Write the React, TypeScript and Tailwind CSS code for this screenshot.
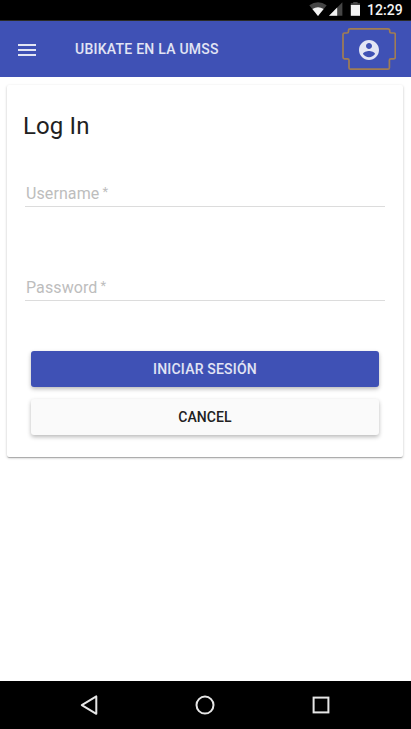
import React from "react";

function StatusBar() {
  return (
    <div className="flex h-[21px] items-start justify-end border-b border-[#2a2a26] bg-black pr-[8px]">
      <svg className="h-5 w-[52px]" viewBox="309 0 52 20">
        <path d="M309.3 5.3Q318 -.7 326.7 5.3L318 16Z" fill="#454545" />
        <path d="M312.4 9Q318 5.7 323.6 9L318 16Z" fill="#f2f2f2" />
        <path d="M342.4 2.3V15.7H329Z" fill="#454545" />
        <path d="M337.2 7.5V15.7H329Z" fill="#f2f2f2" />
        <path d="M350.8 3.2H353.2V2H357.6V3.2H360V6H350.8Z" fill="#454545" />
        <path d="M350.8 5H360V15.8H350.8Z" fill="#f2f2f2" />
      </svg>
      <span className="ml-[6px] w-[36px] whitespace-nowrap text-[14px] leading-[20px] font-medium tracking-[0.05px] text-[#f4f4f4]">12:29</span>
    </div>
  );
}

function Header() {
  return (
    <header className="flex h-14 items-center bg-[#3f51b5] pr-[15px] pl-[18px] text-white/85">
      <button className="mt-[2px] flex w-[18px] flex-col gap-[3px]" aria-label="Menu">
        <span className="h-[2px] w-full bg-[#e2e5f4]" />
        <span className="h-[2px] w-full bg-[#e2e5f4]" />
        <span className="h-[2px] w-full bg-[#e2e5f4]" />
      </button>
      <span className="ml-[39px] text-[14px] leading-5 font-medium tracking-[0.25px] whitespace-nowrap">UBIKATE EN LA UMSS</span>
      <button className="ml-auto" aria-label="Account">
        <svg className="h-[44px] w-[55px]" viewBox="341 27 55 44" fill="none">
          <path
            d="M350 28.8H388Q389.7 28.8 389.7 30.5V31.5Q389.7 33 391.2 33H393.8Q395.3 33 395.3 34.5V57.3Q395.3 58.8 393.8 58.8H390.9Q389.4 58.8 389.4 60.3V67.7Q389.4 69.2 387.9 69.2H350.5Q349 69.2 349 67.7V60.3Q349 58.8 347.5 58.8H344.5Q343 58.8 343 57.3V34.5Q343 33 344.5 33H347Q348.5 33 348.5 31.5V30.3Q348.5 28.8 350 28.8Z"
            stroke="#a17d53"
            strokeWidth="1.7"
          />
          <path
            transform="translate(357 38)"
            fill="#e2e5f4"
            d="M12 2C6.48 2 2 6.48 2 12s4.48 10 10 10 10-4.48 10-10S17.52 2 12 2zm0 3c1.66 0 3 1.34 3 3s-1.34 3-3 3-3-1.34-3-3 1.34-3 3-3zm0 14.2c-2.5 0-4.71-1.28-6-3.22.03-1.99 4-3.08 6-3.08 1.99 0 5.97 1.09 6 3.08-1.29 1.94-3.5 3.22-6 3.22z"
          />
        </svg>
      </button>
    </header>
  );
}

function Field({ label }: { label: string }) {
  return (
    <div className="ml-[18px] flex h-[30px] w-[360px] items-start border-b border-[#dcdcdc] pl-px text-[16px] leading-[34px] tracking-[0.1px] whitespace-nowrap text-[#bdbdbd]">
      {label}<span className="ml-[3px] text-[13px] leading-[30px]">*</span>
    </div>
  );
}

function LoginCard() {
  return (
    <section className="mx-[7px] mt-2 h-[372px] w-[396px] rounded-[2px] bg-white shadow-[0_1px_3px_0_rgba(0,0,0,0.2),0_1px_1px_0_rgba(0,0,0,0.14),0_2px_1px_-1px_rgba(0,0,0,0.12)]">
      <h1 className="pt-[25px] pl-[16px] text-[24px] leading-8 tracking-[0.12px] text-[#212121]">Log In</h1>
      <div className="mt-[35px]">
        <Field label="Username" />
      </div>
      <div className="mt-[64px]">
        <Field label="Password" />
      </div>
      <div className="mx-6 mt-[50px] flex flex-col gap-3">
        <button className="h-9 rounded-[3px] bg-[#3f51b5] text-[14px] font-medium tracking-[0.2px] text-white/85 shadow-[0_2px_4px_0_rgba(0,0,0,0.28)]">INICIAR SESIÓN</button>
        <button className="h-9 rounded-[3px] bg-[#fafafa] text-[14px] font-medium tracking-[0.1px] text-[#212121] shadow-[0_2px_4px_0_rgba(0,0,0,0.28)]">CANCEL</button>
      </div>
    </section>
  );
}

function NavigationBar() {
  return (
    <nav className="mt-auto h-12 bg-black">
      <svg className="h-12 w-[411px]" viewBox="0 0 411 48" fill="none" stroke="#e6e6e6" strokeWidth="2">
        <path d="M96.3 15.4V32.8L81.8 24.1Z" strokeLinejoin="round" />
        <circle cx="205" cy="24.1" r="8.5" />
        <rect x="313.6" y="16.6" width="14.8" height="14.8" />
      </svg>
    </nav>
  );
}

export default function App() {
  return (
    <main className="flex h-[729px] w-[411px] flex-col overflow-hidden bg-white font-['Roboto',sans-serif]">
      <StatusBar />
      <Header />
      <LoginCard />
      <NavigationBar />
    </main>
  );
}
